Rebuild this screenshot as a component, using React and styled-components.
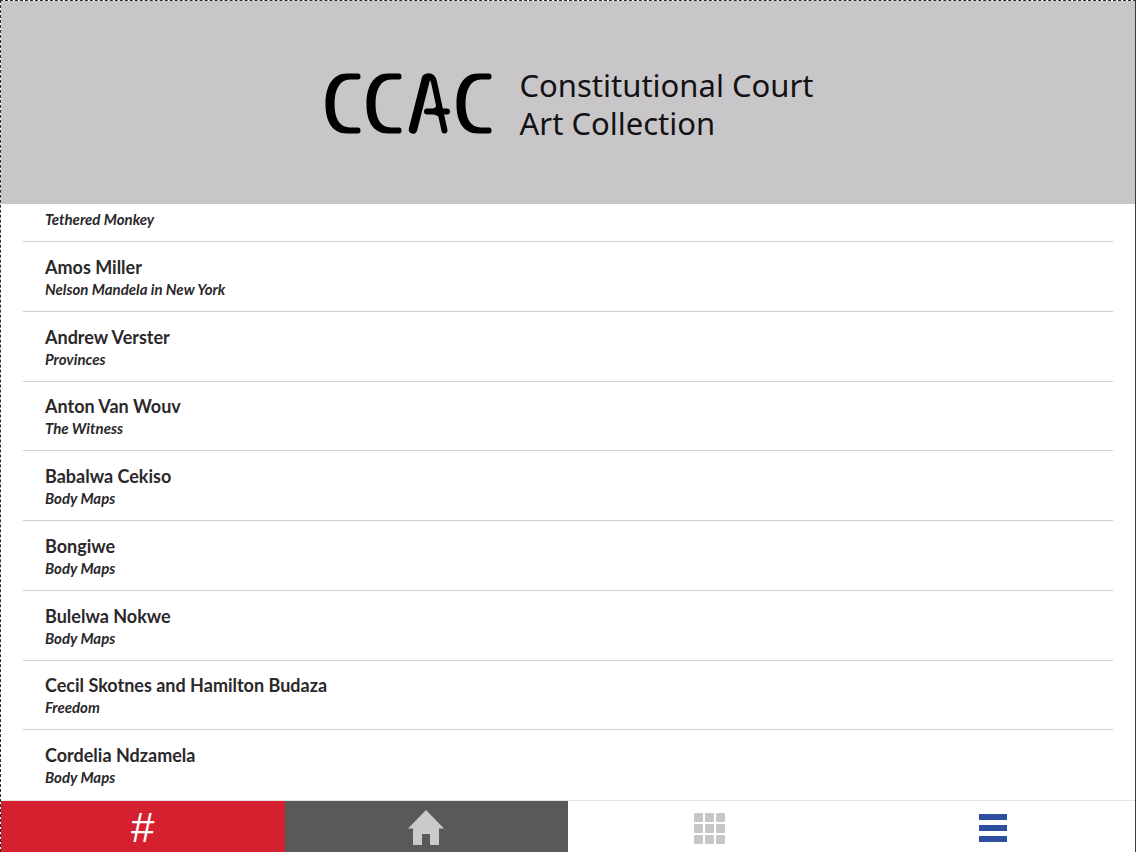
import React from 'react';
import styled, { createGlobalStyle } from 'styled-components';

const GlobalStyle = createGlobalStyle`
  * {
    box-sizing: border-box;
  }
  body {
    margin: 0;
    background: #fff;
    color: #2b282b;
    font-family: Lato, 'Open Sans', sans-serif;
  }
`;

const PageStyles = styled.div`
  display: flex;
  flex-direction: column;
  height: 100vh;
  border-top: 1px dashed #2d2a2e;
  border-left: 1px dashed #2d2a2e;
  border-right: 1px solid #3a3a3c;
`;

const HeaderStyles = styled.header`
  display: flex;
  flex: none;
  align-items: center;
  justify-content: center;
  gap: 27px;
  padding: 65px 0 62px 2px;
  background: #c9c6c9;
  .logo {
    width: 168px;
    height: 62px;
  }
  .title {
    margin: 0;
    color: #121114;
    font-family: 'Noto Sans', 'Open Sans', sans-serif;
    font-size: 31px;
    font-weight: 400;
    line-height: 38px;
  }
  .title span {
    display: block;
  }
`;

const ListStyles = styled.ul`
  display: flex;
  flex: 1;
  flex-direction: column;
  min-height: 0;
  margin: 0;
  padding: 0 22px;
  overflow: hidden;
  list-style: none;
`;

const ArtistRow = styled.li`
  display: flex;
  flex: ${({ $partial }) => ($partial ? '0 0 38px' : '1 0 0')};
  flex-direction: column;
  justify-content: flex-end;
  padding: 0 22px 12px;
  overflow: hidden;
  border-bottom: 1px solid #d0ced0;
  &:last-child {
    border-bottom-color: transparent;
  }
`;

const ArtistName = styled.h2`
  margin: 0;
  font-size: 18px;
  font-weight: 700;
  line-height: 24px;
  white-space: nowrap;
`;

const ArtworkTitle = styled.p`
  margin: 0;
  font-size: 15px;
  font-style: italic;
  font-weight: 700;
  line-height: 20px;
`;

const NavStyles = styled.nav`
  display: grid;
  flex: none;
  grid-template-columns: repeat(4, 1fr);
  height: 52px;
  border-top: 1px solid #e4e4e4;
`;

const NavButton = styled.button`
  display: flex;
  align-items: center;
  justify-content: center;
  padding: 3px 0 0;
  border: 0;
  background: ${({ $background }) => $background || '#fff'};
  color: ${({ $color }) => $color};
  font-family: 'Liberation Sans', sans-serif;
  font-size: 42px;
  line-height: 48px;
  cursor: pointer;
`;

const artists = [
  { name: 'Amos Miller', artwork: 'Nelson Mandela in New York' },
  { name: 'Andrew Verster', artwork: 'Provinces' },
  { name: 'Anton Van Wouv', artwork: 'The Witness' },
  { name: 'Babalwa Cekiso', artwork: 'Body Maps' },
  { name: 'Bongiwe', artwork: 'Body Maps' },
  { name: 'Bulelwa Nokwe', artwork: 'Body Maps' },
  { name: 'Cecil Skotnes and Hamilton Budaza', artwork: 'Freedom' },
  { name: 'Cordelia Ndzamela', artwork: 'Body Maps' },
];

const letterC =
  'M33 0.5H22C7 0.5 0.5 14 0.5 31S7 60.5 22 60.5H33Q35.5 60.5 35.5 57.500T33 54.500H25C15 54.500 9.500 46 9.500 31S15 6.500 25 6.500H33Q35.5 6.500 35.5 3.500T33 0.5Z';

function Logo() {
  return (
    <svg className="logo" viewBox="0 0 168 62" role="img" aria-label="CCAC">
      <path d={letterC} />
      <path d={letterC} transform="translate(41)" />
      <path d={letterC} transform="translate(131)" />
      <g fill="none" stroke="#000" strokeLinecap="round" strokeLinejoin="round">
        <path d="M88 56.5L101 5.500" strokeWidth="8.500" />
        <path d="M102 3.500Q107.500 2.500 109 9L119.500 57.500" strokeWidth="6" />
        <path d="M102 38.500H122" strokeWidth="6" />
      </g>
      <path d="M104 37Q111 36 112.500 30L118 50Q115 42 105 40Z" />
    </svg>
  );
}

function HomeIcon() {
  return (
    <svg width="36" height="36" viewBox="0 0 36 36" aria-hidden="true">
      <path d="M18 0L36 18.500H31V35H22V24H14V35H5V18.500H0Z" fill="currentColor" />
    </svg>
  );
}

function GridIcon() {
  const steps = [0, 11, 22];
  return (
    <svg width="31" height="31" viewBox="0 0 31 31" fill="currentColor" aria-hidden="true">
      {steps.map((y) =>
        steps.map((x) => (
          <rect key={`${x}-${y}`} x={x} y={y} width="9" height="9" rx="1" />
        ))
      )}
    </svg>
  );
}

function ListIcon() {
  return (
    <svg width="28" height="28" viewBox="0 0 28 28" fill="currentColor" aria-hidden="true">
      <path d="M0 0H28V6H0ZM0 11H28V17H0ZM0 22H28V28H0Z" />
    </svg>
  );
}

export default function App() {
  return (
    <>
      <GlobalStyle />
      <PageStyles>
        <HeaderStyles>
          <Logo />
          <h1 className="title">
            <span>Constitutional Court</span>
            <span>Art Collection</span>
          </h1>
        </HeaderStyles>
        <ListStyles>
          <ArtistRow $partial>
            <ArtworkTitle>Tethered Monkey</ArtworkTitle>
          </ArtistRow>
          {artists.map(({ name, artwork }) => (
            <ArtistRow key={name}>
              <ArtistName>{name}</ArtistName>
              <ArtworkTitle>{artwork}</ArtworkTitle>
            </ArtistRow>
          ))}
        </ListStyles>
        <NavStyles>
          <NavButton type="button" aria-label="Number" $background="#d4202f" $color="#fff">
            #
          </NavButton>
          <NavButton type="button" aria-label="Home" $background="#58595b" $color="#c9cacc">
            <HomeIcon />
          </NavButton>
          <NavButton type="button" aria-label="Grid view" $color="#c8c6c9">
            <GridIcon />
          </NavButton>
          <NavButton type="button" aria-label="List view" $color="#2d4f9e">
            <ListIcon />
          </NavButton>
        </NavStyles>
      </PageStyles>
    </>
  );
}
